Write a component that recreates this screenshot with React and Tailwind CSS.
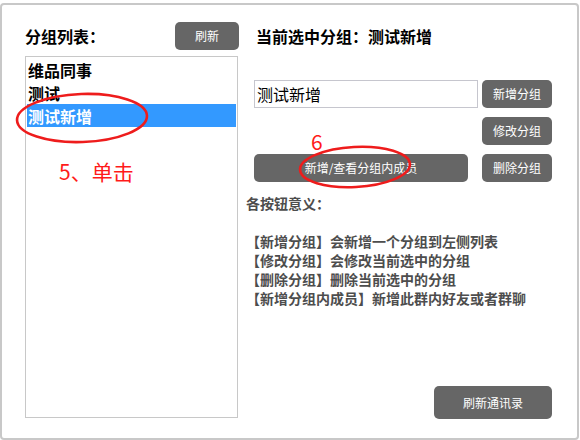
import React from 'react';

const groups = ['维品同事', '测试', '测试新增'];

function GrayButton({ className, children }) {
  return (
    <button className={`bg-[#666666] text-white text-[12px] rounded-[5px] flex items-center justify-center ${className}`}>
      {children}
    </button>
  );
}

function App() {
  const selected = 2;

  return (
    <div className="w-[580px] h-[440px] bg-white pt-[3px] font-['Noto_Sans_CJK_SC',sans-serif] relative overflow-hidden">
      <div className="w-[579px] h-[437px] border-2 border-[#c8c8c8] rounded-[4px] flex pt-[17px] pl-[23px] pr-[24px] pb-[20px] gap-[16px]">
        {/* left column: group list */}
        <div className="w-[213px] flex flex-col">
          <div className="h-[28px] flex items-center justify-between">
            <span className="text-[16px] font-bold text-black leading-none">分组列表：</span>
            <GrayButton className="w-[64px] h-[28px] -mr-[1px]">刷新</GrayButton>
          </div>
          <div className="mt-[6px] flex-1 border border-[#c8c8c8] px-[1px] py-[1px]">
            {groups.map((g, i) => (
              <div
                key={g}
                className={`h-[23px] flex items-center pl-[1px] text-[16px] font-bold leading-none ${i === selected ? 'bg-[#3399ff] text-white' : 'text-black'}`}
              >
                {g}
              </div>
            ))}
          </div>
        </div>

        {/* right column: actions */}
        <div className="w-[298px] flex flex-col">
          <div className="h-[28px] flex items-center pl-[2px]">
            <span className="text-[16px] font-bold text-black leading-none">当前选中分组：测试新增</span>
          </div>

          <div className="mt-[30px] flex gap-[4px]">
            <input
              readOnly
              value="测试新增"
              className="w-[224px] h-[28px] border border-[#c6c6ce] pl-[2px] text-[16px] text-black outline-none"
            />
            <GrayButton className="w-[70px] h-[28px]">新增分组</GrayButton>
          </div>

          <div className="mt-[9px] flex justify-end">
            <GrayButton className="w-[70px] h-[28px]">修改分组</GrayButton>
          </div>

          <div className="mt-[9px] flex gap-[14px]">
            <GrayButton className="w-[214px] h-[28px]">新增/查看分组内成员</GrayButton>
            <GrayButton className="w-[70px] h-[28px]">删除分组</GrayButton>
          </div>

          <div className="mt-[12px] -ml-[8px] text-[14px] leading-[19px] font-bold text-[#4d4d4d]">
            <div>各按钮意义：</div>
            <div className="h-[19px]" />
            <div>【新增分组】会新增一个分组到左侧列表</div>
            <div>【修改分组】会修改当前选中的分组</div>
            <div>【删除分组】删除当前选中的分组</div>
            <div>【新增分组内成员】新增此群内好友或者群聊</div>
          </div>

          <div className="mt-auto flex justify-end -mb-[1px]">
            <GrayButton className="w-[118px] h-[33px]">刷新通讯录</GrayButton>
          </div>
        </div>
      </div>

      {/* annotations drawn over the window */}
      <svg className="absolute left-0 top-0 pointer-events-none" width="580" height="440">
        <ellipse cx="82" cy="118" rx="65" ry="24" fill="none" stroke="#ee1c1c" strokeWidth="2.6" transform="rotate(-2 82 118)" />
        <ellipse cx="355" cy="167" rx="55" ry="20" fill="none" stroke="#ee1c1c" strokeWidth="2.6" transform="rotate(-3 355 167)" />
      </svg>
      <span className="absolute left-[59px] top-[158px] text-[21px] leading-[26px] text-[#ff1a1a]">5、单击</span>
      <span className="absolute left-[311px] top-[128px] text-[21px] leading-[26px] text-[#ff1a1a]">6</span>
    </div>
  );
}

export default App;
